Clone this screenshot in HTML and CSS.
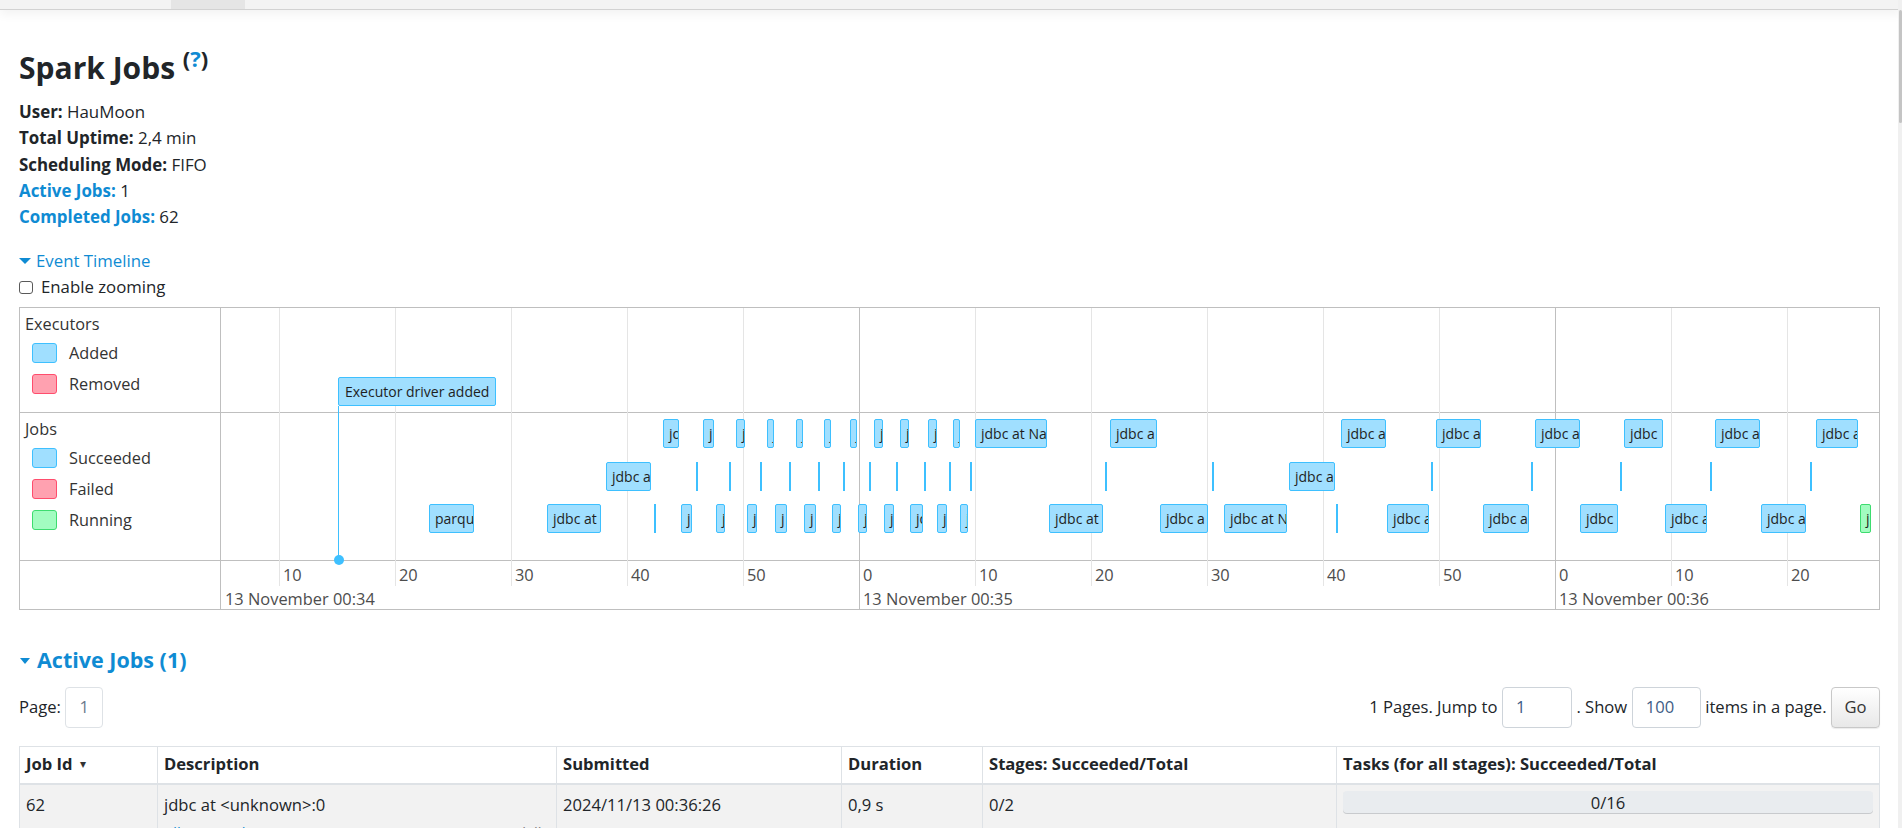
FILE: index.html
```html
<!DOCTYPE html>
<html lang="en">
<head>
<meta charset="utf-8">
<title>Spark Jobs</title>
<link rel="stylesheet" href="styles.css">
</head>
<body>
<div class="topbar"><div class="tab"></div></div>
<div class="scrollbar"><div class="thumb"></div></div>
<main class="page">
  <h3 class="title">Spark Jobs <sup class="help">(<a class="link">?</a>)</sup></h3>
  <ul class="summary">
    <li><strong>User:</strong> HauMoon</li>
    <li><strong>Total Uptime:</strong> 2,4 min</li>
    <li><strong>Scheduling Mode:</strong> FIFO</li>
    <li><a class="link"><strong>Active Jobs:</strong></a> 1</li>
    <li><a class="link"><strong>Completed Jobs:</strong></a> 62</li>
  </ul>
  <div class="toggle"><span class="arrow"></span><a class="link">Event Timeline</a></div>
  <label class="zoom"><span class="checkbox"></span>Enable zooming</label>

  <div class="timeline">
    <div class="legend lg-exec">
      <div class="lg-title">Executors</div>
      <div class="lg-row"><span class="sw blue"></span>Added</div>
      <div class="lg-row"><span class="sw red"></span>Removed</div>
    </div>
    <div class="canvas">
      <div class="hline h1"></div>
      <div class="hline h2"></div>

      <div class="vminor" style="left:58px"></div>
      <div class="vminor" style="left:174px"></div>
      <div class="vminor" style="left:290px"></div>
      <div class="vminor" style="left:406px"></div>
      <div class="vminor" style="left:522px"></div>
      <div class="vmajor" style="left:638px"></div>
      <div class="vminor" style="left:754px"></div>
      <div class="vminor" style="left:870px"></div>
      <div class="vminor" style="left:986px"></div>
      <div class="vminor" style="left:1102px"></div>
      <div class="vminor" style="left:1218px"></div>
      <div class="vmajor" style="left:1334px"></div>
      <div class="vminor" style="left:1450px"></div>
      <div class="vminor" style="left:1566px"></div>

      <span class="minor-label" style="left:62px">10</span>
      <span class="minor-label" style="left:178px">20</span>
      <span class="minor-label" style="left:294px">30</span>
      <span class="minor-label" style="left:410px">40</span>
      <span class="minor-label" style="left:526px">50</span>
      <span class="minor-label" style="left:642px">0</span>
      <span class="minor-label" style="left:758px">10</span>
      <span class="minor-label" style="left:874px">20</span>
      <span class="minor-label" style="left:990px">30</span>
      <span class="minor-label" style="left:1106px">40</span>
      <span class="minor-label" style="left:1222px">50</span>
      <span class="minor-label" style="left:1338px">0</span>
      <span class="minor-label" style="left:1454px">10</span>
      <span class="minor-label" style="left:1570px">20</span>

      <span class="major-label" style="left:4px">13 November 00:34</span>
      <span class="major-label" style="left:642px">13 November 00:35</span>
      <span class="major-label" style="left:1338px">13 November 00:36</span>

      <div class="exec-line"></div>
      <div class="exec-dot"></div>
      <div class="item exec-item">Executor driver added</div>

      <div class="item r1" style="left:442px;width:16px">jd</div>
      <div class="item r1" style="left:482px;width:11px">j</div>
      <div class="item r1" style="left:515px;width:9px">j</div>
      <div class="item r1" style="left:546px;width:7px">j</div>
      <div class="item r1" style="left:575px;width:7px">j</div>
      <div class="item r1" style="left:603px;width:6px">j</div>
      <div class="item r1" style="left:629px;width:6px">j</div>
      <div class="item r1" style="left:653px;width:9px">j</div>
      <div class="item r1" style="left:679px;width:9px">j</div>
      <div class="item r1" style="left:707px;width:9px">j</div>
      <div class="item r1" style="left:732px;width:6px">j</div>
      <div class="item r1" style="left:754px;width:72px">jdbc at Na</div>
      <div class="item r1" style="left:889px;width:47px">jdbc a</div>
      <div class="item r1" style="left:1120px;width:45px">jdbc a</div>
      <div class="item r1" style="left:1215px;width:45px">jdbc a</div>
      <div class="item r1" style="left:1314px;width:45px">jdbc a</div>
      <div class="item r1" style="left:1403px;width:39px">jdbc</div>
      <div class="item r1" style="left:1494px;width:45px">jdbc a</div>
      <div class="item r1" style="left:1595px;width:42px">jdbc a</div>

      <div class="item r2" style="left:385px;width:45px">jdbc a</div>
      <div class="tick r2" style="left:475px"></div>
      <div class="tick r2" style="left:508px"></div>
      <div class="tick r2" style="left:539px"></div>
      <div class="tick r2" style="left:568px"></div>
      <div class="tick r2" style="left:597px"></div>
      <div class="tick r2" style="left:622px"></div>
      <div class="tick r2" style="left:648px"></div>
      <div class="tick r2" style="left:675px"></div>
      <div class="tick r2" style="left:703px"></div>
      <div class="tick r2" style="left:728px"></div>
      <div class="tick r2" style="left:749px"></div>
      <div class="tick r2" style="left:884px"></div>
      <div class="tick r2" style="left:991px"></div>
      <div class="item r2" style="left:1068px;width:46px">jdbc a</div>
      <div class="tick r2" style="left:1210px"></div>
      <div class="tick r2" style="left:1310px"></div>
      <div class="tick r2" style="left:1399px"></div>
      <div class="tick r2" style="left:1489px"></div>
      <div class="tick r2" style="left:1589px"></div>

      <div class="item r3" style="left:208px;width:45px">parqu</div>
      <div class="item r3" style="left:326px;width:54px">jdbc at</div>
      <div class="tick r3" style="left:433px"></div>
      <div class="item r3" style="left:460px;width:11px">j</div>
      <div class="item r3" style="left:495px;width:9px">j</div>
      <div class="item r3" style="left:526px;width:10px">j</div>
      <div class="item r3" style="left:554px;width:12px">j</div>
      <div class="item r3" style="left:583px;width:12px">j</div>
      <div class="item r3" style="left:611px;width:9px">j</div>
      <div class="item r3" style="left:637px;width:9px">j</div>
      <div class="item r3" style="left:663px;width:10px">j</div>
      <div class="item r3" style="left:689px;width:13px">jd</div>
      <div class="item r3" style="left:716px;width:10px">j</div>
      <div class="item r3" style="left:739px;width:8px">j</div>
      <div class="item r3" style="left:828px;width:54px">jdbc at</div>
      <div class="item r3" style="left:939px;width:48px">jdbc a</div>
      <div class="item r3" style="left:1003px;width:63px">jdbc at N</div>
      <div class="tick r3" style="left:1115px"></div>
      <div class="item r3" style="left:1166px;width:42px">jdbc a</div>
      <div class="item r3" style="left:1262px;width:46px">jdbc a</div>
      <div class="item r3" style="left:1359px;width:38px">jdbc</div>
      <div class="item r3" style="left:1444px;width:42px">jdbc a</div>
      <div class="item r3" style="left:1540px;width:45px">jdbc a</div>
      <div class="item r3 running" style="left:1639px;width:11px">j</div>
    </div>
    <div class="legend lg-jobs">
      <div class="lg-title">Jobs</div>
      <div class="lg-row"><span class="sw blue"></span>Succeeded</div>
      <div class="lg-row"><span class="sw red"></span>Failed</div>
      <div class="lg-row"><span class="sw green"></span>Running</div>
    </div>
    <div class="legend lg-axis"></div>
  </div>

  <h4 class="section"><span class="arrow"></span>Active Jobs (1)</h4>

  <div class="pager">
    <div class="pager-left">Page: <span class="page-box">1</span></div>
    <div class="pager-right">
      <span>1 Pages. Jump to</span>
      <span class="field field-jump">1</span>
      <span>. Show</span>
      <span class="field field-show">100</span>
      <span>items in a page.</span>
      <span class="go">Go</span>
    </div>
  </div>

  <table class="jobs">
    <colgroup>
      <col class="w-id"><col class="w-desc"><col class="w-sub"><col class="w-dur"><col class="w-stages"><col>
    </colgroup>
    <thead>
      <tr>
        <th>Job Id <span class="sort">&#9662;</span></th>
        <th>Description</th>
        <th>Submitted</th>
        <th>Duration</th>
        <th>Stages: Succeeded/Total</th>
        <th>Tasks (for all stages): Succeeded/Total</th>
      </tr>
    </thead>
    <tbody>
      <tr>
        <td>62</td>
        <td>
          <div>jdbc at &lt;unknown&gt;:0</div>
          <div class="sub"><a class="kill">(kill)</a><a class="link">jdbc at &lt;unknown&gt;:0</a></div>
        </td>
        <td>2024/11/13 00:36:26</td>
        <td>0,9 s</td>
        <td>0/2</td>
        <td><div class="progress">0/16</div></td>
      </tr>
    </tbody>
  </table>
</main>
</body>
</html>
```
FILE: styles.css
```css
html, body {
  margin: 0;
  height: 100%;
  overflow: hidden;
  background: #fff;
}
body {
  font-family: "Open Sans", "Noto Sans", sans-serif;
  font-size: 16.6px;
  line-height: 26.25px;
  color: #212529;
}
.link { color: #0f8bd3; text-decoration: none; }

.topbar {
  height: 9px;
  background: #f3f3f3;
  border-bottom: 1px solid #d2d2d2;
  box-shadow: 0 3px 12px rgba(0,0,0,0.07);
  display: flex;
}
.tab { margin-left: 171px; width: 74px; background: #e5e5e5; }

.scrollbar {
  position: fixed;
  top: 0;
  right: 0;
  width: 4px;
  height: 100%;
  background: #f0f0f0;
}
.thumb {
  margin: 10px 0 0 1px;
  width: 3px;
  height: 113px;
  background: #c4c4c4;
  border-radius: 2px;
}

.page { padding: 0 22px 0 19px; }

.title {
  margin: 40.6px 0 0;
  font-size: 30px;
  line-height: 34px;
  font-weight: 700;
  color: #212529;
}
.help {
  font-size: 22px;
  line-height: 0;
  vertical-align: 12px;
}
.help .link { color: #0f8bd3; }

.summary {
  list-style: none;
  margin: 14.5px 0 0;
  padding: 0;
  font-size: 16.9px;
}
.summary strong { font-weight: 700; }

.toggle {
  margin-top: 17.75px;
  display: flex;
  align-items: center;
  font-size: 16.8px;
}
.arrow {
  width: 0;
  height: 0;
  border-left: 6px solid transparent;
  border-right: 6px solid transparent;
  border-top: 6.5px solid #0f8bd3;
  margin-right: 5px;
}
.zoom {
  display: flex;
  align-items: center;
  font-size: 16.8px;
}
.checkbox {
  width: 12px;
  height: 11px;
  border: 1px solid #5a5a5a;
  border-radius: 3px;
  margin: 0 8px 0 0;
  background: #fff;
}

/* timeline */
.timeline {
  margin-top: 6px;
  display: grid;
  grid-template-columns: 201px 1fr;
  grid-template-rows: 105px 148px 48px;
  border: 1px solid #bfbfbf;
  font-size: 16.3px;
  color: #333;
}
.legend {
  border-right: 1px solid #bfbfbf;
  padding: 5px 0 0 5px;
  box-sizing: border-box;
}
.lg-exec { grid-column: 1; grid-row: 1; border-bottom: 1px solid #bfbfbf; }
.lg-jobs { grid-column: 1; grid-row: 2; border-bottom: 1px solid #bfbfbf; }
.lg-axis { grid-column: 1; grid-row: 3; }
.lg-title { line-height: 22px; margin-bottom: 3px; }
.lg-row {
  height: 31px;
  display: flex;
  align-items: center;
  padding-left: 7px;
}
.sw {
  width: 23px;
  height: 18px;
  border: 1px solid;
  border-radius: 3px;
  margin-right: 12px;
}
.sw.blue { background: #a0dfff; border-color: #3ec0ff; }
.sw.red { background: #ffa1b0; border-color: #ff4d6d; }
.sw.green { background: #a2fcc0; border-color: #3ddc6f; }

.canvas {
  grid-column: 2;
  grid-row: 1 / 4;
  position: relative;
}
.hline {
  position: absolute;
  left: 0;
  right: 0;
  height: 1px;
  background: #bfbfbf;
}
.hline.h1 { top: 104px; }
.hline.h2 { top: 252px; }
.vminor {
  position: absolute;
  top: 0;
  width: 1px;
  height: 278px;
  background: #e5e5e5;
}
.vmajor {
  position: absolute;
  top: 0;
  width: 1px;
  height: 301px;
  background: #bfbfbf;
}
.minor-label, .major-label {
  position: absolute;
  font-size: 16.4px;
  line-height: 19px;
  color: #4d4d4d;
  white-space: nowrap;
}
.minor-label { top: 257.5px; }
.major-label { top: 281.5px; }

.item {
  position: absolute;
  box-sizing: border-box;
  height: 29px;
  padding: 5px 0 5px 5px;
  border: 1px solid #3ec0ff;
  border-radius: 2px;
  background: #a0dfff;
  font-size: 14px;
  line-height: 17px;
  color: #1e1e1e;
  white-space: nowrap;
  overflow: hidden;
}
.item.running { background: #a2fcc0; border-color: #3ddc6f; }
.r1 { top: 111px; }
.r2 { top: 154px; }
.r3 { top: 196px; }
.tick {
  position: absolute;
  width: 2px;
  height: 29px;
  background: #3ec0ff;
}
.exec-item {
  left: 117px;
  top: 69px;
  width: 158px;
  padding-left: 6px;
}
.exec-line {
  position: absolute;
  left: 117px;
  top: 98px;
  width: 1px;
  height: 154px;
  background: #3ec0ff;
}
.exec-dot {
  position: absolute;
  left: 112.5px;
  top: 247.5px;
  width: 10px;
  height: 10px;
  border-radius: 50%;
  background: #3ec0ff;
}

/* active jobs */
.section {
  margin: 37.7px 0 0;
  font-size: 21.5px;
  line-height: 26px;
  font-weight: 700;
  color: #0f8bd3;
  display: flex;
  align-items: center;
}
.section .arrow {
  border-left-width: 5px;
  border-right-width: 5px;
  border-top-width: 6.5px;
  margin: 2px 7px 0 1px;
}

.pager {
  margin-top: 13.3px;
  display: flex;
  justify-content: space-between;
  align-items: center;
  height: 41px;
}
.pager-left, .pager-right {
  display: flex;
  align-items: center;
  gap: 4.5px;
}
.page-box {
  box-sizing: border-box;
  width: 37.5px;
  height: 41px;
  border: 1px solid #dee2e6;
  border-radius: 4px;
  display: flex;
  align-items: center;
  justify-content: center;
  color: #6c7a8c;
}
.field {
  box-sizing: border-box;
  height: 41px;
  border: 1px solid #ced4da;
  border-radius: 4px;
  padding-left: 13px;
  display: flex;
  align-items: center;
  color: #3f5d86;
}
.field-jump { width: 70px; }
.field-show { width: 69px; }
.go {
  box-sizing: border-box;
  width: 49px;
  height: 41px;
  border: 1px solid #c8c8c8;
  border-radius: 4px;
  background: linear-gradient(#ffffff, #e8e8e8);
  box-shadow: 0 1px 1px rgba(0,0,0,0.08);
  display: flex;
  align-items: center;
  justify-content: center;
  color: #333;
}

.jobs {
  margin-top: 18px;
  width: 100%;
  border-collapse: collapse;
  table-layout: fixed;
  border: 1px solid #dee2e6;
}
.w-id { width: 138px; }
.w-desc { width: 399px; }
.w-sub { width: 285px; }
.w-dur { width: 141px; }
.w-stages { width: 354px; }
.jobs th {
  text-align: left;
  font-weight: 700;
  padding: 4.5px 6px 5.25px;
  border: 1px solid #dee2e6;
  border-bottom-width: 2px;
  white-space: nowrap;
}
.sort { font-size: 12px; font-weight: 400; margin-left: 3px; vertical-align: 2px; color: #333; }
.jobs td {
  padding: 7px 6px;
  border: 1px solid #dee2e6;
  vertical-align: top;
  background: #f2f2f2;
}
.sub { font-size: 15px; line-height: 22px; margin-top: 3px; }
.kill { float: right; color: #808080; margin-right: 4px; }
.progress {
  margin-top: -1px;
  height: 23px;
  line-height: 23px;
  border-radius: 4px;
  background: #e9ecef;
  box-shadow: inset 0 -1px 0 rgba(0,0,0,0.14);
  text-align: center;
  color: #212529;
}
```
